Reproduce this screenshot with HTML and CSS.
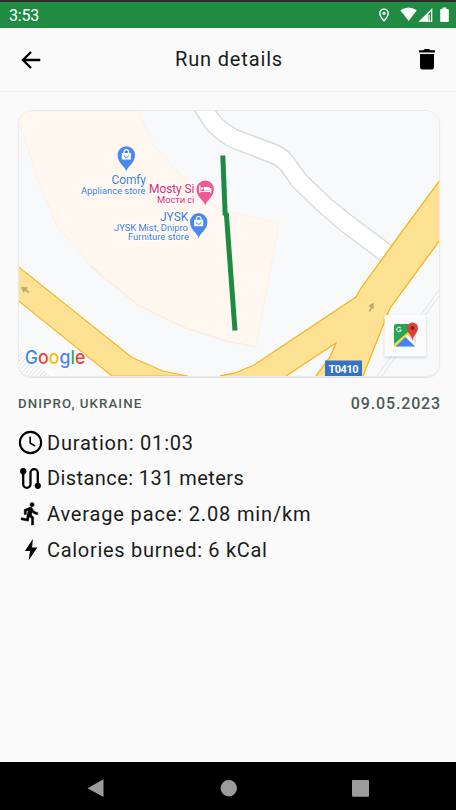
FILE: index.html
```
<!DOCTYPE html>
<html lang="en">
<head>
<meta charset="utf-8">
<title>Run details</title>
<link rel="stylesheet" href="styles.css">
</head>
<body>
<div class="screen">
  <div class="status">
    <span class="time">3:53</span>
    <svg class="status-icons" width="74" height="18" viewBox="376 6 74 18">
      <path d="M384 9.1a4.2 4.2 0 0 0-4.2 4.2c0 3 4.2 7.6 4.2 7.6s4.2-4.6 4.2-7.6a4.2 4.2 0 0 0-4.2-4.2z" fill="none" stroke="#fff" stroke-width="1.4"/>
      <circle cx="384" cy="13.2" r="1.6" fill="#fff"/>
      <path d="M400.3 10.2Q408.5 4.6 416.8 10.2L408.7 21z" fill="#fff"/>
      <path d="M418.5 21.8L432.3 8v13.8z" fill="#fff"/>
      <path d="M428.5 13.8l2.6-2.3v9.2h-2.6z" fill="#228b43"/>
      <path d="M429.4 15v6" stroke="#fff" stroke-width=".8"/>
      <path d="M442.5 7.5h3.8v1.6h1.5q1 0 1 1v10.8q0 1-1 1h-6.6q-1 0-1-1V10.100q0-1 1-1h1.300z" fill="#fff"/>
    </svg>
  </div>
  <header class="appbar">
    <svg class="back" width="26" height="26" viewBox="0 0 26 26"><path d="M22.300 13H5.500M13 5L5 13l8 8" fill="none" stroke="#000" stroke-width="2.400"/></svg>
    <h1>Run details</h1>
    <svg class="trash" width="16" height="21" viewBox="0 0 16 21"><path d="M0 1.300h4.500L5.700 0h4.500l1.200 1.300H16v2.300H0zM1 5h14v13.300q0 2.300-2.300 2.300H3.300Q1 20.600 1 18.300z"/></svg>
  </header>
  <main>
    <div class="map">
      <svg width="420" height="265" viewBox="19 111 420 265">
        <defs>
          <pattern id="hatch" width="3.2" height="3.2" patternUnits="userSpaceOnUse" patternTransform="rotate(40)"><path d="M0 0V4" stroke="#dcdee0" stroke-width="1.600"/></pattern>
          <g id="shop"><path d="M0 16.500C-1.200 11-8.700 8.500-8.700 0a8.700 8.700 0 0 1 17.400 0C8.700 8.500 1.200 11 0 16.500z" fill="#4a89f3"/><path d="M-4.500-2h9v6.500h-9z" fill="#fff"/><path d="M-2.300-2v-1a2.300 2.300 0 0 1 4.600 0v1" fill="none" stroke="#fff" stroke-width="1.200"/><path d="M-2.200.5a2.200 1.900 0 0 0 4.400 0" fill="none" stroke="#4a89f3" stroke-width="1"/></g>
        </defs>
        <path d="M19 111h420v265H19z" fill="#f8f9fb"/>
        <path d="M19 111H139l2 6 12 28 30 33 30 26 12 7 54 12-23 124-30-6-41-13-47-23-48-40-20-25-13-14L38 180 22 130 19 122z" fill="#fff7f0" stroke="#fbf1e2" stroke-width="1"/>
        <path d="M90 266l48 39 47 23 41 13 30 6" fill="none" stroke="#f9eee2" stroke-width="1.500"/>
        <path d="M194 110L206 128Q213 137 226 145 231 148 240 151L266 161Q275 164 281 170L292 186 318 211 340 230 381 261 392 246 352 216 332 200 306 175 293 157Q286 148 275 144L240 131Q229 126 222 119L215 110z" fill="#fff" stroke="#d8dade" stroke-width="1.400"/>
        <path d="M439 290L377 376M439 296L382 376" fill="none" stroke="#dfe1e3" stroke-width="1"/>
        <path d="M19 344L57 376H19z" fill="#fff"/>
        <path d="M19 348L51 376H19z" fill="url(#hatch)"/>
        <path d="M18 266.500L132 357.500 163 371 188 376H112L18 300.500z" fill="#fde293" stroke="#f6b82e" stroke-width="1.200"/>
        <path d="M440 180L391.500 246 361 288 356 297 254 365 235 373 220 376H286L336 343 330 357 316 376H363L390 308 440 240z" fill="#fde293"/>
        <path d="M440 180L391.500 246 361 288 356 297 254 365 235 373 220 376M286 376L336 343 330 357 316 376M363 376L390 308 440 240" fill="none" stroke="#f6b524" stroke-width="1.300"/>
        <path d="M29 292.500L23.500 288.500" stroke="#bda774" stroke-width="1.700"/><path d="M21 287l7 .300-4.500 5.500z" fill="#bda774"/>
        <path d="M369.500 311.500L372.300 306" stroke="#bda774" stroke-width="1.700"/><path d="M373.300 302.500l.500 6.500-5.500-3z" fill="#bda774"/>
        <path d="M222.800 155.500L225.200 215.500M226.300 213L235 330.500" fill="none" stroke="#1e8b43" stroke-width="5"/>
        <use href="#shop" x="126.300" y="155"/>
        <use href="#shop" x="198.700" y="221.800"/>
        <path d="M205.200 205.500c-1.200-5.500-8.700-8-8.700-16.300a8.700 8.700 0 0 1 17.400 0c0 8.300-7.500 10.800-8.700 16.300z" fill="#ee5b92"/>
        <path d="M199.800 185.500v7.500M199.800 191.500h10.800v1.500M210.600 192v-4" stroke="#fff" stroke-width="1.200" fill="none"/><path d="M203.800 187h4.500q2 0 2 2v1.500h-6.500z" fill="#fff"/><circle cx="202" cy="188.500" r="1.200" fill="#fff"/>
        <g class="poi">
          <text class="name" x="111.500" y="184" textLength="34.500">Comfy</text>
          <text x="81" y="193.500" textLength="64.500">Appliance store</text>
          <g class="pink"><text class="name" x="149" y="193.300" textLength="45.500">Mosty Si</text><text x="157" y="203" textLength="37.300">Мости сі</text></g>
          <text class="name" x="160" y="221" textLength="28.300">JYSK</text>
          <text x="114" y="231" textLength="74">JYSK Mist, Dnipro</text>
          <text x="128" y="240.300" textLength="61">Furniture store</text>
        </g>
        <path d="M325 360.500h37V376H325z" fill="#3672c5"/>
        <text class="road" x="328.500" y="372.800" textLength="30">T0410</text>
        <g class="google">
          <text x="24.800" y="363.500" textLength="60.500" lengthAdjust="spacingAndGlyphs"><tspan fill="#4285f4">G</tspan><tspan fill="#ea4335">o</tspan><tspan fill="#fbbc05">o</tspan><tspan fill="#4285f4">g</tspan><tspan fill="#34a853">l</tspan><tspan fill="#ea4335">e</tspan></text>
        </g>
        <path class="maps-button" d="M384.500 315h41.500v41.500h-41.500z" fill="#fff" fill-opacity=".93"/>
        <g transform="translate(394 324)">
          <path d="M2 0h20v22.500H2Q0 22.500 0 20.500V2Q0 0 2 0z" fill="#dcdfe1"/>
          <path d="M2 0H17L16 8 0 22V2Q0 0 2 0z" fill="#25a45a"/>
          <path d="M0 20L14 8l3 3L4 22.500H1z" fill="#fbdc3f"/>
          <path d="M1.500 22.500L11.500 13 21 22.500z" fill="#4285f4"/>
          <path d="M11.500 13l2-2 8.500 9v2.500z" fill="#fff"/>
          <path d="M18.500 17C18 11.500 13 9 13 4a5.500 5.500 0 0 1 11 0c0 5-5 7.500-5.500 13z" fill="#df4238"/><circle cx="18.500" cy="4" r="2" fill="#7b2422"/>
          <path d="M6.800 4A2.300 2.300 0 1 0 7.300 6H5.200" fill="none" stroke="#fff" stroke-width="1"/>
        </g>
      </svg>
    </div>
    <div class="meta"><span class="place">DNIPRO, UKRAINE</span><span class="date">09.05.2023</span></div>
    <ul class="stats">
      <li><svg viewBox="0 0 24 24"><circle cx="12" cy="12" r="10.200" fill="none" stroke="#000" stroke-width="2"/><path d="M11.700 6.500v6l4.800 3" fill="none" stroke="#000" stroke-width="1.600"/></svg><span class="duration">Duration: 01:03</span></li>
      <li><svg viewBox="0 0 24 24"><path d="M5 5v12.500a3.500 3.500 0 0 0 7 0v-11a3.500 3.500 0 0 1 7 0V18" fill="none" stroke="#000" stroke-width="2.200"/><circle cx="5" cy="5" r="3"/><circle cx="19" cy="19" r="3"/></svg><span class="distance">Distance: 131 meters</span></li>
      <li><svg viewBox="0 0 24 24"><path d="M13.490 5.480c1.100 0 2-.9 2-2s-.9-2-2-2-2 .9-2 2 .9 2 2 2zm-3.600 13.900l1-4.400 2.100 2v6h2v-7.500l-2.100-2 .6-3c1.300 1.500 3.300 2.500 5.500 2.500v-2c-1.900 0-3.500-1-4.300-2.400l-1-1.600c-.4-.6-1-1-1.700-1-.3 0-.5.100-.8.100l-5.200 2.200v4.700h2v-3.400l1.800-.7-1.600 8.100-4.900-1-.4 2 7 1.400z" stroke="#000" stroke-width=".5"/></svg><span class="pace">Average pace: 2.08 min/km</span></li>
      <li><svg viewBox="0 0 24 24"><path d="M14.300 2L6.500 13.500h5L10.300 22.300 18.500 10h-5z"/></svg><span class="calories">Calories burned: 6 kCal</span></li>
    </ul>
  </main>
  <nav>
    <svg width="456" height="48" viewBox="0 0 456 48"><g fill="#9b9b9b"><path d="M87.500 26.200L103.500 17.300v17.800z"/><circle cx="228.800" cy="26.200" r="8.200"/><rect x="352" y="18" width="17" height="16.800" rx="1"/></g></svg>
  </nav>
</div>
</body>
</html>
```

FILE: styles.css
```
* { box-sizing: border-box; }
body { margin: 0; background: #fafafa; font-family: Roboto, "Liberation Sans", sans-serif; color: #191c1a; }
.screen { width: 456px; height: 810px; display: flex; flex-direction: column; overflow: hidden; }
.status { height: 28px; border-top: 2px solid #2c2b2d; background: #228b43; display: flex; align-items: center; justify-content: space-between; padding: 0 6px 0 9px; flex: none; }
.time { color: #fff; font-size: 16px; line-height: 26px; letter-spacing: -.2px; padding-top: 1px; }
.appbar { height: 64px; flex: none; border-bottom: 1px solid #eeeeee; display: flex; align-items: center; justify-content: space-between; padding: 0 21px 0 18px; }
h1 { margin: 0 5px 2px 0; font-size: 20px; font-weight: 400; letter-spacing: .85px; line-height: 24px; }
main { flex: 1; padding: 18px 16px 0 18px; }
.map { width: 422px; height: 267px; border: 1px solid #ebebeb; border-radius: 14px; overflow: hidden; box-shadow: 0 1px 1px #e2e2e2; }
.map svg { display: block; }
.poi { font-size: 9.5px; fill: #3b7de0; paint-order: stroke; stroke: #fff; stroke-width: 1.5px; }
.poi .name { font-size: 12px; }
.pink { fill: #df2a72; }
.road { font-size: 11px; font-weight: 700; fill: #fff; }
.google { font: 500 18.5px Inter, sans-serif; paint-order: stroke; stroke: #fff; stroke-width: 2px; }
.maps-button { filter: drop-shadow(0 1px 1px #0003); }
.meta { display: flex; justify-content: space-between; align-items: center; height: 20px; margin-top: 16px; color: #4b5b54; font-weight: 500; }
.place { font-size: 13.3px; letter-spacing: 1.05px; }
.date { font-size: 16px; letter-spacing: .85px; margin-right: -1px; }
.stats { list-style: none; margin: 12px 0 0; padding: 0; }
.stats li { display: flex; align-items: center; height: 35.600px; gap: 4px; font-size: 20px; white-space: nowrap; }
.stats svg { width: 25px; height: 25px; flex: none; }
.duration { letter-spacing: .8px; }
.distance { letter-spacing: .42px; }
.pace { letter-spacing: .85px; }
.calories { letter-spacing: .7px; }
nav { height: 48px; background: #000; flex: none; }
nav svg { display: block; }
```
